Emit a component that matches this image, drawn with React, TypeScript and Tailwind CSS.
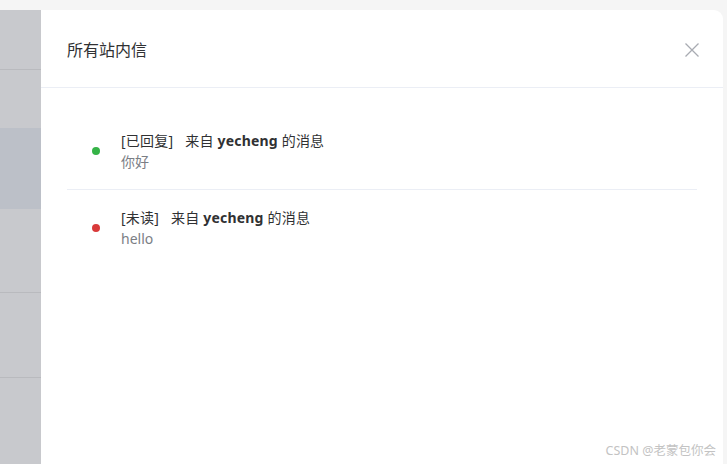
import React from 'react';

const messages = [
  { id: 1, status: '已回复', from: 'yecheng', body: '你好', dot: 'bg-[#35b347]' },
  { id: 2, status: '未读', from: 'yecheng', body: 'hello', dot: 'bg-[#d93a3a]' },
];

const CloseIcon: React.FC = () => (
  <svg width="16" height="16" viewBox="0 0 16 16" fill="none">
    <path d="M1.5 1.5 L14.5 14.5 M14.5 1.5 L1.5 14.5" stroke="#a8abb2" strokeWidth="1.3" />
  </svg>
);

const App: React.FC = () => {
  return (
    <div
      className="relative flex h-[464px] w-[727px] flex-col overflow-hidden bg-[#f5f5f5] text-[#303133]"
      style={{ fontFamily: '"Noto Sans", "Noto Sans CJK SC", sans-serif' }}
    >
      {/* page strip behind the drawer */}
      <div className="h-[10px] shrink-0" />

      <div className="flex flex-1 pr-[4px]">
        {/* dimmed sidebar column */}
        <div className="flex w-[41px] shrink-0 flex-col bg-[#c8c9cd]">
          <div className="h-[60px] border-b border-[#b9babe]" />
          <div className="h-[58px]" />
          <div className="h-[81px] bg-[#bcc0c8]" />
          <div className="h-[84px] border-b border-[#b9babe]" />
          <div className="h-[85px] border-b border-[#b9babe]" />
          <div className="flex-1" />
        </div>

        {/* drawer */}
        <div className="flex flex-1 flex-col rounded-tr-[9px] bg-white">
          <div className="flex h-[78px] shrink-0 items-center justify-between border-b border-[#ebeef5] pl-[26px] pr-[23px] pt-[3px]">
            <span className="text-[16px] leading-[22px] text-[#303133]">所有站内信</span>
            <CloseIcon />
          </div>

          <div className="px-[26px] pt-[25px]">
            {messages.map((m, i) => (
              <div
                key={m.id}
                className={`flex items-center py-[17px] pl-[25px] ${i < messages.length - 1 ? 'border-b border-[#ebeef5]' : ''}`}
              >
                <span className={`h-[8px] w-[8px] shrink-0 rounded-full ${m.dot}`} />
                <div className="ml-[21px] flex flex-col">
                  <div className="text-[14px] leading-[21px] tracking-[0.2px] text-[#303133]">
                    [{m.status}]
                    <span className="ml-[12px]">来自 </span>
                    <span className="font-bold">{m.from}</span>
                    <span> 的消息</span>
                  </div>
                  <div className="text-[14px] leading-[21px] text-[#7b7e85]">{m.body}</div>
                </div>
              </div>
            ))}
          </div>
        </div>
      </div>

      <div className="absolute bottom-[5px] right-[11px] text-[12.5px] leading-[16px] text-[#c3c3c3]">
        CSDN @老蒙包你会
      </div>
    </div>
  );
};

export default App;
